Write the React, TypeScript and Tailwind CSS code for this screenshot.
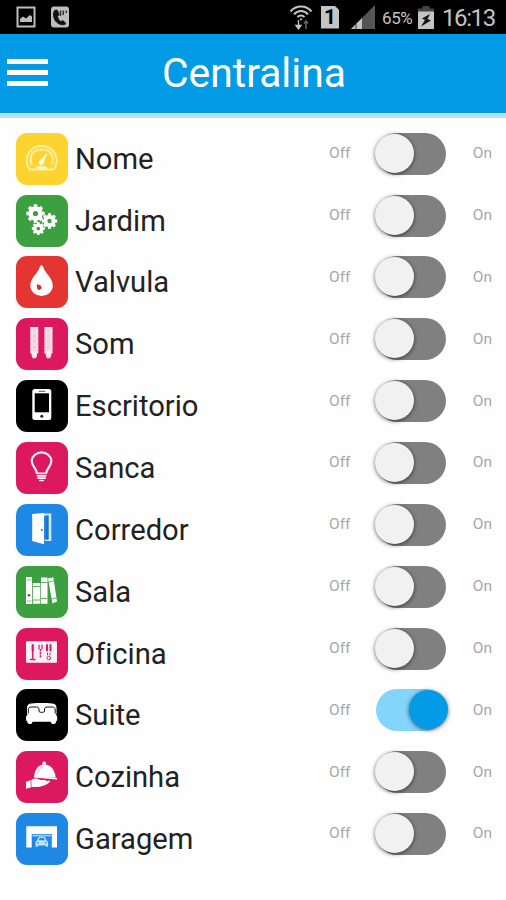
import type { ReactNode } from 'react';
import clsx from 'clsx';

const gearPath = (cx: number, cy: number, r: number, teeth: number) => {
  const points: string[] = [];
  for (let i = 0; i < teeth; i++) {
    const step = (Math.PI * 2) / teeth;
    const a = i * step - Math.PI / 2;
    [
      [-0.32, 0.78],
      [-0.24, 1],
      [0.24, 1],
      [0.32, 0.78],
    ].forEach(([offset, scale]) => {
      const t = a + offset * step;
      points.push(`${(cx + Math.cos(t) * r * scale).toFixed(2)},${(cy + Math.sin(t) * r * scale).toFixed(2)}`);
    });
  }
  const hole = r * 0.28;
  return `M${points.join('L')}ZM${cx - hole},${cy}a${hole},${hole} 0 1 0 ${hole * 2},0a${hole},${hole} 0 1 0 ${-hole * 2},0Z`;
};

const Gauge = () => (
  <g fill="none" stroke="#fff0a8" strokeLinejoin="round">
    <path d="M13.500 36.500C6.500 25.500 14 12.800 25.700 12.800s19.200 12.700 12.200 23.700Z" strokeWidth="1.800" />
    <path d="M15.500 31.500C12.500 22 18 16.500 25.700 16.500s13.200 5.500 10.200 15" strokeWidth="2.400" strokeDasharray="2 0.500" />
    <path d="M31.500 19.500 24 27.500a2.500 2.500 0 1 0 3.800 2.200Z" fill="#fffbe6" stroke="none" />
    <path d="M19 36.500v-1.500l3-2h7l3 2v1.500Z" fill="#fff3b8" stroke="none" />
  </g>
);

const Gears = () => (
  <g fillRule="evenodd">
    <path d={gearPath(19.5, 18.5, 9.3, 8)} />
    <path d={gearPath(33.5, 26, 7.8, 8)} />
    <path d={gearPath(22.3, 33.6, 6.6, 8)} />
  </g>
);

const Drop = () => (
  <>
    <path d="M25.500 9.300c1 0 1.500 1 1.800 2C29 17 36.800 22.500 36.800 29.500a11.200 10.400 0 0 1-22.500 0C14.300 22.500 22 17 23.700 11.300c.3-1 .8-2 1.800-2Z" />
    <path d="M20.700 28.500c2-.5 4.800.5 4.800 3a2.300 2.300 0 0 1-4.300 1.200Z" fill="#d92f2f" />
  </>
);

const Speakers = () => (
  <>
    {[14.3, 28.5].map((x) => (
      <g key={x}>
        <path d={`M${x} 9h8v26.500h-1.300v2.500l-1.200 2.300h-3l-1.200-2.300v-2.500h-1.300Z`} fill="#fde6ee" />
        <g fill="none" stroke="#ec9dba" strokeWidth="0.700">
          <circle cx={x + 4} cy="12.500" r="1" />
          <circle cx={x + 4} cy="18" r="1.200" />
          <circle cx={x + 4} cy="23.500" r="1.200" />
          <circle cx={x + 4} cy="29" r="1.200" />
          <path d={`M${x} 15.200h8M${x} 20.800h8M${x} 26.200h8M${x} 32h8`} strokeDasharray="1.500 0.800" />
        </g>
      </g>
    ))}
  </>
);

const Phone = () => (
  <>
    <rect x="16.300" y="9" width="19" height="31" rx="2.500" />
    <rect x="18.700" y="13.300" width="14.300" height="19" fill="#000" />
    <rect x="22.500" y="10.700" width="7" height="1.200" rx="0.600" fill="#777" />
    <circle cx="25.800" cy="36.200" r="1.500" fill="#222" />
  </>
);

const Bulb = () => (
  <g fill="none" stroke="#fff0f5" strokeLinecap="round" strokeLinejoin="round">
    <path d="M20.800 31C20.800 26.500 15.700 25 15.700 18.500a9.900 9 0 0 1 19.700 0C35.400 25 30.300 26.500 30.300 31" strokeWidth="2.200" />
    <path d="M21 31.300h9.200M21.500 33.800h8.200M22 36.200h7.200M24 38.500h3.200" strokeWidth="1.700" />
  </g>
);

const Door = () => (
  <>
    <path d="M25 9.500h10.300v27.500H28.500v-1.600h4V11.800H27Z" fill="#d6e9fb" />
    <path d="M30 11.500h2.500v24H30Z" fill="#1a74cc" />
    <path d="M16.200 10 28 9v31.300l-11.800-3.300Z" />
    <circle cx="25.800" cy="26" r="0.900" fill="#1565b5" />
  </>
);

const Books = () => (
  <>
    <path d="M10 11h6v27h-6ZM16.800 17h7.500v20.700h-7.500ZM25 11.500h6.500v26.200H25Z" />
    <path d="m32 12.500 5.300-1.300 3.700 24.300-4.500 2Z" />
    <g stroke="#3c9f40" fill="none">
      <path d="M17 20.500h7M25 16.500h6.500M25 32.500h6.500M17 34h7M32.700 16.200l5-1.300M35.700 33l4.800-1.200" strokeWidth="0.800" />
      <path d="M10.500 14h5M10.500 35h5" strokeWidth="0.600" />
    </g>
    <circle cx="13" cy="29.300" r="1.300" fill="#257c2a" />
  </>
);

const Tools = () => (
  <>
    <rect x="10" y="13.300" width="31" height="21.500" rx="1" fill="#fff0f5" />
    <g stroke="#d81b60" fill="none" strokeLinecap="round">
      <path d="M16.700 17v5.500" strokeWidth="2.200" />
      <path d="M16.700 22v8M14.500 31.500h4.500" strokeWidth="1.500" />
      <path d="M23 17v4M26 17v4" strokeWidth="1.200" />
      <path d="M24.500 22v9" strokeWidth="1.800" strokeDasharray="0.500 2.500" />
      <path d="M31 17v5.500M34.500 17v5.500" strokeWidth="2" />
      <path d="M31.500 25v2M34 25v2" strokeWidth="1" />
      <circle cx="32.700" cy="30" r="1.800" strokeWidth="0.900" />
    </g>
  </>
);

const Bed = () => (
  <>
    <path d="M11 25v-6c0-3 1.500-4.300 4.500-4.500 7-.6 13.500-.6 20.500 0 3 .2 4.500 1.500 4.500 4.500v6Z" />
    <path
      d="M12.300 24.500v-3.500c0-2 1-3 3-3h5.200c2 0 2.500 1.200 2.500 3v1.500c1 1.200 4.500 1.200 5.500 0v-1.500c0-1.800.5-3 2.500-3h5.200c2 0 3 1 3 3v3.500"
      fill="none"
      stroke="#000"
      strokeWidth="0.950"
    />
    <path d="M13 24.500h25.500c1.800.8 2.800 2.500 2.800 4.700 0 1.800-.5 2.800-1.300 3.300 0 1.700-.8 2.500-2.500 2.500s-2.500-.8-2.800-2.300H16.500c-.3 1.500-1 2.300-2.700 2.300s-2.500-.8-2.500-2.500c-.8-.5-1.300-1.500-1.300-3.300 0-2.200 1-3.900 3-4.700Z" />
  </>
);

const Cloche = () => (
  <>
    <circle cx="28.200" cy="12.300" r="1.900" />
    <path d="M18.200 25.500C19 17.500 23 13.300 28.500 13.500c6.500.3 10.500 5.500 11.200 13.200Z" />
    <path d="m18 24.800 23 2.200v1.500l-23-2Z" />
    <path d="m10 30.700 4.700-1.400v7.200l-4.700 1.300Z" />
    <path d="M15.400 29c3-2.300 6.500-1.800 9.300 0h4.500c1.500 0 1.200 2-.3 2.200l-4 .4c3 .4 6-2.200 8.300-2.200 1.500.2 1 1.500 0 2.200-4.500 3.500-9 5-17.800 4.300Z" />
    <path d="M21.500 22.500c1-4 3-6 5.500-7" fill="none" stroke="#e77ba3" strokeWidth="0.700" />
  </>
);

const Garage = () => (
  <>
    <path d="M10.300 13.300H41v21.300h-5.200V21H15.700v13.600h-5.400Z" />
    <path d="M16.500 21.700h18.500v1.800H16.500Z" fill="#9dccf5" />
    <path
      d="M19.500 30c0-1.300.7-2 1.500-2.500l1.300-2.800c.3-.7.8-1 1.500-1h4c.7 0 1.200.3 1.500 1l1.300 2.800c.8.500 1.500 1.200 1.500 2.500v3.700h-2.300V32.500h-8v1.200h-2.300Z"
      fill="#c5e1f9"
    />
    <path d="M22.800 27.300h6l-.8-2.200h-4.400Z" fill="#1e88e5" />
    <path d="M21 29.800h2M28.600 29.800h2" stroke="#1e88e5" strokeWidth="1" />
  </>
);

interface Device {
  name: string;
  tile: string;
  icon: () => ReactNode;
  on?: boolean;
}

const devices: Device[] = [
  { name: 'Nome', tile: 'bg-[#fdd42f]', icon: Gauge },
  { name: 'Jardim', tile: 'bg-[#3c9f40]', icon: Gears },
  { name: 'Valvula', tile: 'bg-[#e53532]', icon: Drop },
  { name: 'Som', tile: 'bg-[#dc185f]', icon: Speakers },
  { name: 'Escritorio', tile: 'bg-black', icon: Phone },
  { name: 'Sanca', tile: 'bg-[#dc185f]', icon: Bulb },
  { name: 'Corredor', tile: 'bg-[#1e88e5]', icon: Door },
  { name: 'Sala', tile: 'bg-[#3c9f40]', icon: Books },
  { name: 'Oficina', tile: 'bg-[#dc185f]', icon: Tools },
  { name: 'Suite', tile: 'bg-black', icon: Bed, on: true },
  { name: 'Cozinha', tile: 'bg-[#dc185f]', icon: Cloche },
  { name: 'Garagem', tile: 'bg-[#1e88e5]', icon: Garage },
];

const Toggle = ({ on }: { on?: boolean }) => (
  <div
    role="switch"
    aria-checked={!!on}
    className={clsx('h-[42px] w-[70px] rounded-full pt-px', on ? 'bg-[#84d4fb]' : 'bg-[#808080]')}
  >
    <div
      className={clsx(
        'size-[39px] rounded-full shadow-[0_1px_4px_rgba(0,0,0,0.6)]',
        on ? 'ml-[33px] bg-[#039be5]' : '-ml-px bg-[#f1f1f1]',
      )}
    />
  </div>
);

const StatusBar = () => (
  <div className="flex h-[34px] items-center bg-black pl-4 pr-[10px] text-[#c4c4c4]">
    <svg className="h-[22px] w-5" viewBox="0 0 20 22" fill="none">
      <rect x="1.500" y="1.500" width="17" height="19" stroke="#bdbdbd" strokeWidth="2" />
      <path d="M4 16v-3l3-2.500 3 2 4-3.500 2 1.500V16Z" fill="#bdbdbd" />
    </svg>
    <svg className="ml-[15px] h-[22px] w-[18px]" viewBox="0 0 18 22" fill="none">
      <rect x="0" y="0.500" width="18" height="21" rx="3" fill="#bdbdbd" />
      <path d="M3.500 4.500C1.500 9 3 14 6 16.500s6.500 3 9 1l-3-2.800-2.200.8c-1.800-1-3-2.800-3.300-5L8 8.300 6 4Z" fill="#111" stroke="#111" />
      <path d="M9.500 4.500v5.500M12.300 4.500v4.500M15.300 4.500v2.500" stroke="#333" strokeWidth="1.500" />
    </svg>

    <svg className="ml-auto h-[26px] w-[24px]" viewBox="0 0 24 26" fill="none" stroke="#c4c4c4" strokeWidth="2">
      <path d="M1.500 7.500C7 .8 17 .8 22.500 7.500M5 10.300c4-4.500 10-4.500 14 0M8.500 13.200c2-2.200 5-2.200 7 0" />
      <path d="M10.500 14.500h3L12 17Z" fill="#c4c4c4" stroke="none" />
      <path d="M9.500 16v8M7 21.500 9.500 25l2.500-3.500Z" strokeWidth="1.300" fill="#c4c4c4" />
      <path d="M17 25v-8M15 19.500l2-2.500 2 2.500" stroke="#666" strokeWidth="1.500" />
    </svg>
    <div className="ml-2 flex h-[23px] w-[18px] items-center justify-center bg-[#c4c4c4] [clip-path:polygon(0_0,75%_0,100%_18%,100%_100%,0_100%)]">
      <span className="pt-px text-[21px] font-bold leading-none text-black">1</span>
    </div>
    <svg className="ml-3 h-[24px] w-6" viewBox="0 0 24 24">
      <path d="M0 24 24 0v24Z" fill="#555" />
      <path d="M0 24 11 13v11Z" fill="#c4c4c4" />
      <path d="M5 19v5" stroke="#333" />
    </svg>
    <span className="ml-[7px] mt-[3px] w-8 whitespace-nowrap text-[17px] tracking-[-0.4px]">65%</span>
    <svg className="ml-1 h-[23px] w-4" viewBox="0 0 16 23">
      <path d="M4.500 0h7v2.500H16V9H0V2.500h4.500Z" fill="#444" />
      <path d="M0 5.500h16V23H0Z" fill="#c4c4c4" />
      <path d="M12 8 4 12.500l3 1.500-4 6.500 10-6-3.500-1.500Z" fill="#111" />
    </svg>
    <span className="ml-2 mt-[2px] w-[54px] whitespace-nowrap text-[24px] tracking-[-1.4px]">16:13</span>
  </div>
);

const Header = () => (
  <header className="relative flex h-[84px] items-center justify-center border-b-[5px] border-[#b3e2fb] bg-[#039be5]">
    <button className="absolute left-[7px] top-[25px] flex flex-col gap-[6px]" aria-label="Menu">
      <span className="h-[5px] w-[41px] bg-white" />
      <span className="h-[5px] w-[41px] bg-white" />
      <span className="h-[5px] w-[41px] bg-white" />
    </button>
    <h1 className="mb-px ml-[2px] text-[40.8px] leading-none text-white">Centralina</h1>
  </header>
);

const DeviceRow = ({ device }: { device: Device }) => {
  const Icon = device.icon;
  return (
    <li className="flex h-[61.85px] items-start pl-4 pr-[14px]">
      <div className={clsx('size-[52px] rounded-[11px]', device.tile)}>
        <svg viewBox="0 0 52 52" className="size-full" fill="#fff">
          <Icon />
        </svg>
      </div>
      <span className="ml-[7px] text-[29.200px] leading-[53px] text-[#222] [font-variant-ligatures:none]">
        {device.name}
      </span>
      <div className="ml-auto flex items-center text-[15.500px] text-[#a8a8a8]">
        <span className="w-[47px]">Off</span>
        <Toggle on={device.on} />
        <span className="w-[46px] text-right">On</span>
      </div>
    </li>
  );
};

export default function App() {
  return (
    <main className="h-[900px] w-[506px] overflow-hidden bg-[#fefefe] font-[Roboto,sans-serif]">
      <StatusBar />
      <Header />
      <ul className="pt-[14.800px]">
        {devices.map((device) => (
          <DeviceRow key={device.name} device={device} />
        ))}
      </ul>
    </main>
  );
}
